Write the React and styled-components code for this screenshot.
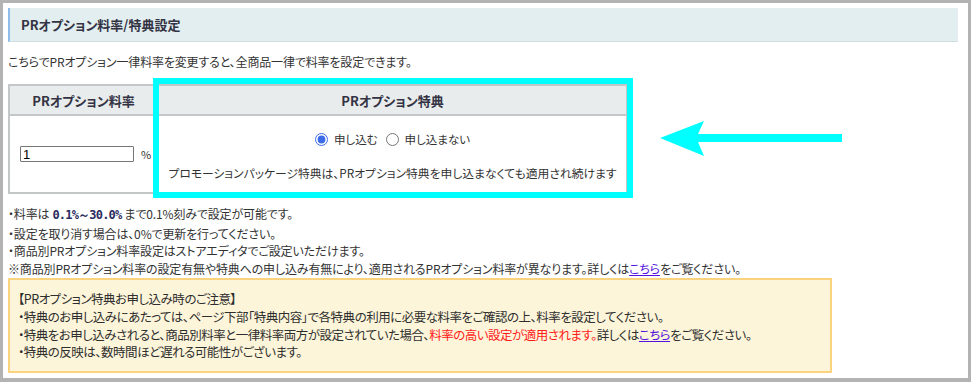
import React from "react";
import styled, { createGlobalStyle } from "styled-components";

const Global = createGlobalStyle`
  html, body { margin: 0; padding: 0; background: #ffffff; }
  body {
    font-family: "Noto Sans CJK JP", "Noto Sans", sans-serif;
    color: #333333;
    font-feature-settings: "palt";
  }
`;

const Frame = styled.div`
  box-sizing: border-box;
  width: 971px;
  height: 382px;
  border: 3px solid #b3b3b3;
  border-bottom-width: 4px;
  background: #ffffff;
  padding: 5px 10px 0 5px;
`;

const TitleBar = styled.h2`
  margin: 0;
  box-sizing: border-box;
  height: 34px;
  background: #e2eeef;
  border-left: 2px solid #8dbde8;
  border-bottom: 1px solid #cfdfe0;
  padding-left: 11px;
  display: flex;
  align-items: center;
  font-size: 13px;
  font-weight: bold;
  color: #333344;
`;

const Lead = styled.p`
  margin: 11px 0 0;
  font-size: 12px;
  line-height: 18px;
  letter-spacing: -0.15px;
`;

const TableWrap = styled.div`
  position: relative;
  margin-top: 13px;
  width: 620px;
`;

const Table = styled.table`
  width: 620px;
  border-collapse: collapse;
  table-layout: fixed;
`;

const Th = styled.th`
  height: 28px;
  padding: 0;
  background: #e8ecec;
  border: 2px solid #c3c7c7;
  font-size: 13px;
  font-weight: bold;
  color: #333344;
  text-align: center;
  width: ${(p) => p.$w || "auto"};
`;

const Td = styled.td`
  height: 76px;
  padding: 0;
  border: 2px solid #c3c7c7;
  vertical-align: middle;
  text-align: ${(p) => p.$align || "left"};
`;

const RateRow = styled.div`
  display: flex;
  align-items: center;
  gap: 7px;
  padding-left: 10px;
  font-size: 11px;
`;

const RateInput = styled.input`
  box-sizing: border-box;
  width: 114px;
  height: 16px;
  border: 1px solid #767676;
  border-radius: 1px;
  padding: 0 2px;
  font-family: "Liberation Sans", sans-serif;
  font-size: 13px;
  color: #000;
`;

const RadioRow = styled.div`
  display: flex;
  justify-content: center;
  align-items: center;
  font-size: 11.5px;
  margin-top: 4px;
`;

const RadioLabel = styled.label`
  display: inline-flex;
  align-items: center;
  gap: 6px;
  margin-right: 4px;
`;

const Radio = styled.input`
  margin: 0 0 0 4px;
  width: 13px;
  height: 13px;
  accent-color: #3d6ae6;
`;

const BenefitNote = styled.div`
  margin-top: 17px;
  font-size: 11.8px;
  text-align: center;
  letter-spacing: 0;
`;

const Highlight = styled.div`
  position: absolute;
  left: 145px;
  top: -6px;
  width: 480px;
  height: 120px;
  box-sizing: border-box;
  border: 6px solid #00ffff;
  pointer-events: none;
`;

const Arrow = styled.svg`
  position: absolute;
  left: 644px;
  top: 36px;
`;

const Notes = styled.div`
  margin-top: 11px;
  font-size: 12px;
  line-height: 17.5px;
  letter-spacing: -0.15px;
`;

const Strong = styled.b`
  font-family: "DejaVu Sans Mono", "Liberation Mono", monospace;
  font-weight: bold;
  color: #2b2b5e;
  letter-spacing: -0.8px;
  margin: 0 3px;
`;

const Link = styled.a`
  color: #5511dd;
  text-decoration: underline;
`;

const Caution = styled.div`
  box-sizing: border-box;
  margin-top: 1px;
  width: 824px;
  height: 95px;
  border: 2px solid #fbd37e;
  background: #fdf5d9;
  padding: 10px 8px;
  font-size: 12.5px;
  line-height: 17.8px;
  letter-spacing: -0.5px;
  color: #2e2e2e;
`;

const Red = styled.span`
  color: #ff1a1a;
`;

export default function App() {
  return (
    <>
      <Global />
      <Frame>
        <TitleBar>PRオプション料率/特典設定</TitleBar>
        <Lead>こちらでPRオプション一律料率を変更すると、全商品一律で料率を設定できます。</Lead>
        <TableWrap>
          <Table>
            <thead>
              <tr>
                <Th $w="147px">PRオプション料率</Th>
                <Th>PRオプション特典</Th>
              </tr>
            </thead>
            <tbody>
              <tr>
                <Td>
                  <RateRow>
                    <RateInput defaultValue="1" />
                    <span>%</span>
                  </RateRow>
                </Td>
                <Td $align="center">
                  <RadioRow>
                    <RadioLabel>
                      <Radio type="radio" name="benefit" defaultChecked />
                      申し込む
                    </RadioLabel>
                    <RadioLabel>
                      <Radio type="radio" name="benefit" />
                      申し込まない
                    </RadioLabel>
                  </RadioRow>
                  <BenefitNote>
                    プロモーションパッケージ特典は、PRオプション特典を申し込まなくても適用され続けます
                  </BenefitNote>
                </Td>
              </tr>
            </tbody>
          </Table>
          <Highlight />
          <Arrow width="190" height="40" viewBox="0 0 190 40">
            <polygon
              points="8,18 52,1 46,14 191,14 191,22 46,22 52,36"
              fill="#00ffff"
            />
          </Arrow>
        </TableWrap>
        <Notes>
          <div>
            ・料率は<Strong>0.1%～30.0%</Strong>まで0.1%刻みで設定が可能です。
          </div>
          <div>・設定を取り消す場合は、0%で更新を行ってください。</div>
          <div>・商品別PRオプション料率設定はストアエディタでご設定いただけます。</div>
          <div>
            ※商品別PRオプション料率の設定有無や特典への申し込み有無により、適用されるPRオプション料率が異なります。詳しくは
            <Link href="#">こちら</Link>をご覧ください。
          </div>
        </Notes>
        <Caution>
          <div>【PRオプション特典お申し込み時のご注意】</div>
          <div>
            ・特典のお申し込みにあたっては、ページ下部「特典内容」で各特典の利用に必要な料率をご確認の上、料率を設定してください。
          </div>
          <div>
            ・特典をお申し込みされると、商品別料率と一律料率両方が設定されていた場合、
            <Red>料率の高い設定が適用されます。</Red>詳しくは<Link href="#">こちら</Link>をご覧ください。
          </div>
          <div>・特典の反映は、数時間ほど遅れる可能性がございます。</div>
        </Caution>
      </Frame>
    </>
  );
}
